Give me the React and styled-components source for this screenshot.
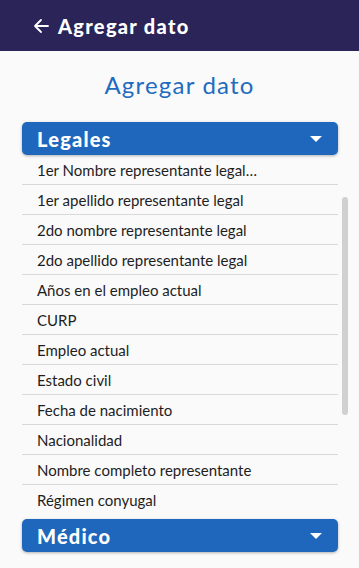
import React from "react";
import styled, { createGlobalStyle } from "styled-components";

const GlobalStyle = createGlobalStyle`
    html, body {
        margin: 0;
        padding: 0;
        background: #fafafa;
        font-family: "Lato", "Liberation Sans", sans-serif;
    }
`;

const legales = [
    "1er Nombre representante legal…",
    "1er apellido representante legal",
    "2do nombre representante legal",
    "2do apellido representante legal",
    "Años en el empleo actual",
    "CURP",
    "Empleo actual",
    "Estado civil",
    "Fecha de nacimiento",
    "Nacionalidad",
    "Nombre completo representante",
    "Régimen conyugal",
];

function Caret() {
    return (
        <svg width="12" height="6" viewBox="0 0 12 6">
            <path d="M0 0 L12 0 L6 6 Z" fill="#fff" />
        </svg>
    );
}

function BackArrow() {
    return (
        <svg width="16" height="16" viewBox="0 0 16 16">
            <path
                d="M15 8 H2 M8 2 L2 8 L8 14"
                stroke="#fff"
                strokeWidth="1.8"
                fill="none"
                strokeLinecap="round"
                strokeLinejoin="round"
            />
        </svg>
    );
}

function App() {
    return (
        <Screen>
            <GlobalStyle />
            <TopBar>
                <BackArrow />
                <TopTitle>Agregar dato</TopTitle>
            </TopBar>
            <Heading>Agregar dato</Heading>
            <Content>
                <GroupHeader>
                    <span>Legales</span>
                    <Caret />
                </GroupHeader>
                <List>
                    {legales.map((item, i) => (
                        <Row key={item} last={i === legales.length - 1}>
                            {item}
                        </Row>
                    ))}
                    <ScrollThumb />
                </List>
                <GroupHeader>
                    <span>Médico</span>
                    <Caret />
                </GroupHeader>
            </Content>
        </Screen>
    );
}

export default App;

const Screen = styled.div`
    width: 359px;
    height: 568px;
    overflow: hidden;
    background: #fafafa;
`;

const TopBar = styled.div`
    height: 51px;
    background: #2a2459;
    display: flex;
    align-items: center;
    gap: 9px;
    padding-left: 33px;
    box-sizing: border-box;
`;

const TopTitle = styled.h1`
    margin: 0;
    color: #fff;
    font-size: 20px;
    font-weight: 900;
    letter-spacing: 1.3px;
`;

const Heading = styled.h2`
    margin: 0;
    height: 71px;
    box-sizing: border-box;
    padding-top: 19px;
    text-align: center;
    color: #1f6bbf;
    font-size: 24px;
    font-weight: 400;
    letter-spacing: 1.2px;
`;

const Content = styled.div`
    padding: 0 21px 0 22px;
    display: flex;
    flex-direction: column;
`;

const GroupHeader = styled.div`
    height: 33px;
    background: #1f67bc;
    border-radius: 5px;
    box-shadow: 0 1px 3px rgba(0, 0, 0, 0.3);
    display: flex;
    align-items: center;
    justify-content: space-between;
    padding: 0 16px 0 15px;
    color: #fff;
    font-size: 20px;
    font-weight: 900;
    letter-spacing: 1.2px;
`;

const List = styled.div`
    position: relative;
    margin-bottom: 4px;
`;

const Row = styled.div`
    height: 30px;
    box-sizing: border-box;
    display: flex;
    align-items: center;
    padding-left: 15px;
    color: #1e1e1e;
    font-size: 15px;
    border-bottom: ${(p) => (p.last ? "none" : "1px solid #d9d9d9")};
`;

const ScrollThumb = styled.div`
    position: absolute;
    right: -10px;
    top: 42px;
    width: 6px;
    height: 218px;
    border-radius: 3px;
    background: #d0d0d0;
`;
